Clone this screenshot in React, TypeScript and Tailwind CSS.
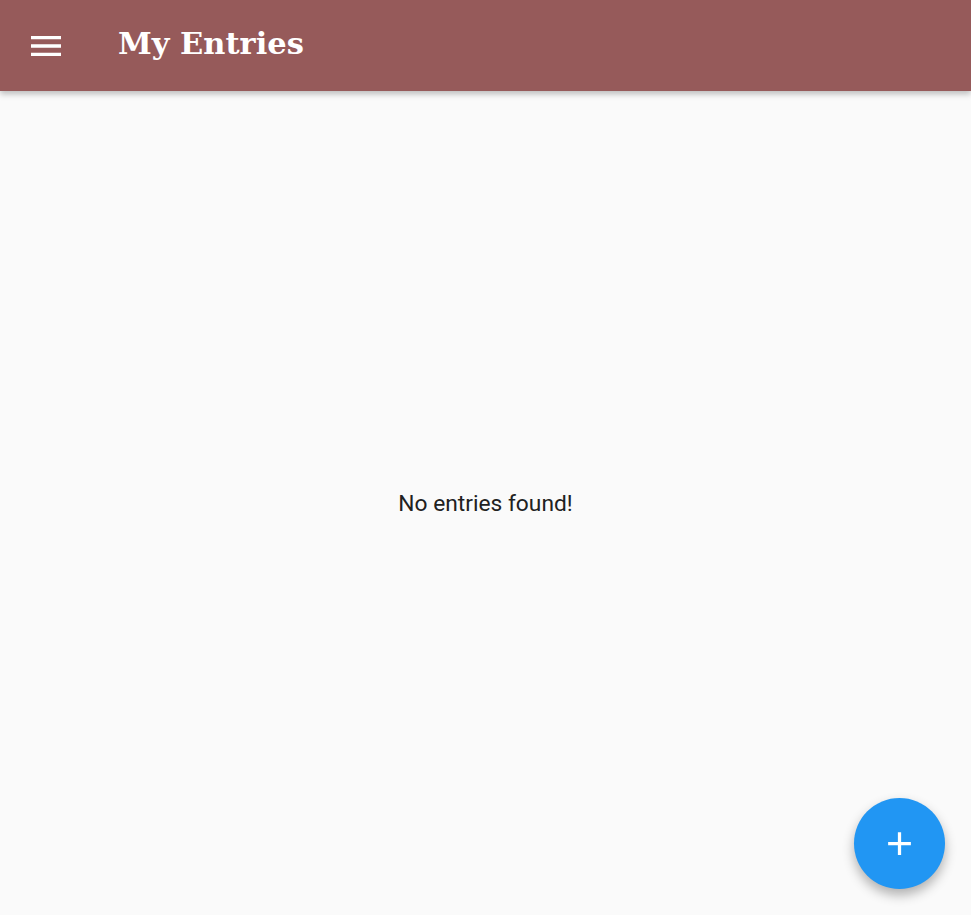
function App() {
  return (
    <div className="flex h-[915px] flex-col bg-[#fafafa]" style={{ fontFamily: "Roboto, sans-serif" }}>
      <header className="relative z-10 flex h-[91px] shrink-0 items-center bg-[#965a5a] shadow-[0_3px_6px_rgba(0,0,0,0.25)]">
        <button className="ml-[26px] flex h-[39px] w-[40px] items-center justify-center text-white">
          <svg width="40" height="40" viewBox="0 0 24 24" fill="white">
            <path d="M3 18h18v-2H3v2zm0-5h18v-2H3v2zm0-7v2h18V6H3z" />
          </svg>
        </button>
        <h1
          className="ml-[52px] mb-[4px] text-[30.5px] font-bold text-white"
          style={{ fontFamily: "'DejaVu Serif', 'Liberation Serif', serif" }}
        >
          My Entries
        </h1>
      </header>
      <main className="flex flex-1 items-center justify-center">
        <p className="mt-[2px] text-[22.75px] text-[#212121]">No entries found!</p>
      </main>
      <button className="absolute left-[854px] top-[798px] flex h-[91px] w-[91px] items-center justify-center rounded-full bg-[#2196f3] shadow-[0_6px_12px_rgba(0,0,0,0.3)]">
        <svg width="39" height="39" viewBox="0 0 24 24" fill="white">
          <path d="M19 13h-6v6h-2v-6H5v-2h6V5h2v6h6v2z" />
        </svg>
      </button>
    </div>
  );
}

export default App;
